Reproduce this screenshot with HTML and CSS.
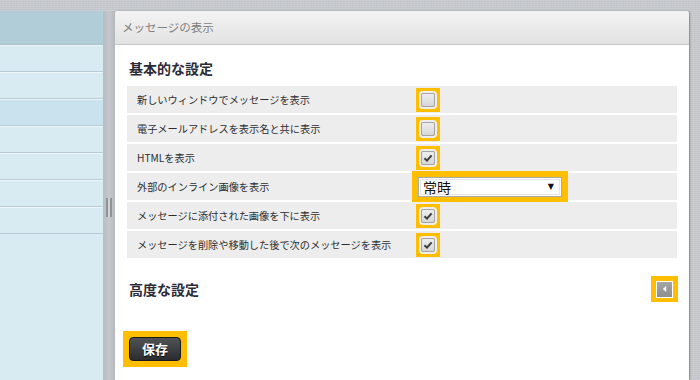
FILE: index.html
```html
<!DOCTYPE html>
<html lang="ja">
 <head>
  <meta charset="utf-8">
  <title>メッセージの表示</title>
  <link rel="stylesheet" href="styles.css">
 </head>
 <body>
  <div class="layout">
   <div class="sidebar">
    <div class="sidebar-head"></div>
    <div class="side-row"></div>
    <div class="side-row"></div>
    <div class="side-row selected"></div>
    <div class="side-row"></div>
    <div class="side-row"></div>
    <div class="side-row"></div>
    <div class="side-row"></div>
   </div>
   <div class="splitter"><span class="grip"></span></div>
   <div class="panel">
    <div class="panel-head">メッセージの表示</div>
    <div class="panel-body">
     <h2 class="section-title">基本的な設定</h2>
     <div class="options">
      <div class="opt">
       <span class="opt-label">新しいウィンドウでメッセージを表示</span>
       <span class="hl"><span class="check"></span></span>
      </div>
      <div class="opt">
       <span class="opt-label">電子メールアドレスを表示名と共に表示</span>
       <span class="hl"><span class="check"></span></span>
      </div>
      <div class="opt">
       <span class="opt-label">HTMLを表示</span>
       <span class="hl"><span class="check on"><svg viewBox="0 0 10 10" width="10" height="10"><path d="M1.5 5.2 L4 7.6 L8.6 2.4" fill="none" stroke="#3c3c3c" stroke-width="2"/></svg></span></span>
      </div>
      <div class="opt">
       <span class="opt-label">外部のインライン画像を表示</span>
       <span class="hl hl-select"><span class="select"><span>常時</span><span class="arrow">▼</span></span></span>
      </div>
      <div class="opt">
       <span class="opt-label">メッセージに添付された画像を下に表示</span>
       <span class="hl"><span class="check on"><svg viewBox="0 0 10 10" width="10" height="10"><path d="M1.5 5.2 L4 7.6 L8.6 2.4" fill="none" stroke="#3c3c3c" stroke-width="2"/></svg></span></span>
      </div>
      <div class="opt">
       <span class="opt-label">メッセージを削除や移動した後で次のメッセージを表示</span>
       <span class="hl"><span class="check on"><svg viewBox="0 0 10 10" width="10" height="10"><path d="M1.5 5.2 L4 7.6 L8.6 2.4" fill="none" stroke="#3c3c3c" stroke-width="2"/></svg></span></span>
      </div>
     </div>
     <div class="advanced">
      <h2 class="section-title">高度な設定</h2>
      <span class="hl hl-toggle"><span class="toggle"><svg viewBox="0 0 6 8" width="5" height="8"><path d="M5 0.5 L1 4 L5 7.5 Z" fill="#fff"/></svg></span></span>
     </div>
     <span class="hl hl-save"><span class="save">保存</span></span>
    </div>
   </div>
  </div>
 </body>
</html>
```

FILE: styles.css
```css
body {
   margin: 0;
   background-color: #c8cbcf;
   background-image: repeating-linear-gradient(90deg, rgba(255,255,255,0.06) 0 1px, transparent 1px 3px),
                     repeating-linear-gradient(0deg, rgba(0,0,0,0.03) 0 1px, transparent 1px 2px);
   font-family: "Noto Sans CJK JP", "Liberation Sans", sans-serif;
   color: #333;
   height: 380px;
   overflow: hidden;
}

.layout {
   display: flex;
   padding-top: 11px;
   height: 369px;
}

.sidebar {
   width: 103px;
   background: #d9ebf2;
   border-top-right-radius: 3px;
   overflow: hidden;
}

.sidebar-head {
   height: 33px;
   background: #b1cdd7;
   border-bottom: 1px solid #a6c2cd;
}

.side-row {
   height: 26px;
   background: #d9ebf2;
   border-bottom: 1px solid #b6ccd6;
   box-shadow: inset 0 1px 0 #eef6f9;
}

.side-row.selected {
   background: #c9e2ed;
}

.splitter {
   width: 12px;
   display: flex;
   align-items: center;
   justify-content: center;
   background: linear-gradient(90deg, #b9bcc0, #c4c7cb 50%, #b6b9bd);
}

.grip {
   width: 6px;
   height: 19px;
   margin-top: 24px;
   border-left: 2px solid #8f9397;
   border-right: 2px solid #8f9397;
   box-sizing: border-box;
   background: #d0d3d6;
}

.panel {
   width: 574px;
   background: #fff;
   border-top-left-radius: 3px;
   border-top-right-radius: 3px;
   box-shadow: 1px 0 2px rgba(0,0,0,0.35);
}

.panel-head {
   height: 33px;
   line-height: 33px;
   padding-left: 7px;
   font-size: 11.5px;
   color: #808080;
   background: linear-gradient(#f3f3f3, #e3e3e3);
   border-bottom: 1px solid #c9c9c9;
   border-top-left-radius: 3px;
   border-top-right-radius: 3px;
}

.panel-body {
   padding: 0 12px;
}

.section-title {
   margin: 0;
   padding-left: 2px;
   font-size: 14px;
   font-weight: bold;
   color: #2b2b38;
}

.panel-body > .section-title {
   height: 41px;
   line-height: 46px;
}

.options {
   display: flex;
   flex-direction: column;
   gap: 2px;
}

.opt {
   height: 27px;
   display: flex;
   align-items: center;
   background: #ededed;
}

.opt-label {
   width: 285px;
   padding-left: 10px;
   box-sizing: border-box;
   font-size: 10.2px;
   color: #2e2e2e;
}

.hl {
   display: flex;
   align-items: center;
   justify-content: center;
   background: #ffbf00;
}

.opt .hl {
   width: 24px;
   height: 24px;
   margin-left: 4px;
}

.check {
   width: 12px;
   height: 12px;
   border: 1px solid #a4a4a4;
   border-radius: 2px;
   background: linear-gradient(#eeeeee, #d6d6d6);
   box-shadow: 0 0 0 2px #eeeeee;
   display: flex;
   align-items: center;
   justify-content: center;
}

.opt .hl-select {
   width: 156px;
   height: 31px;
   margin-left: 0;
}

.select {
   width: 144px;
   height: 20px;
   border: 1px solid #a9a9a9;
   box-shadow: inset 0 0 0 1px #fff, inset 0 0 0 2px #e4e4e4;
   background: #fff;
   display: flex;
   align-items: center;
   justify-content: space-between;
   padding: 0 7px 0 4px;
   box-sizing: border-box;
   font-size: 14px;
   color: #111;
}

.arrow {
   font-size: 8px;
   font-family: "DejaVu Sans", sans-serif;
}

.advanced {
   display: flex;
   align-items: center;
   justify-content: space-between;
   height: 26px;
   margin-top: 18px;
}

.hl-toggle {
   width: 27px;
   height: 26px;
   margin-right: -1px;
}

.toggle {
   width: 15px;
   height: 15px;
   border: 1px solid #fff;
   background: linear-gradient(#a5a5a5, #8e8e8e);
   display: flex;
   align-items: center;
   justify-content: center;
}

.hl-save {
   display: inline-flex;
   width: 64px;
   height: 36px;
   margin: 29px 0 0 -4px;
}

.save {
   width: 52px;
   height: 24px;
   box-sizing: border-box;
   border: 1px solid #1a1a1a;
   border-radius: 4px;
   background: linear-gradient(#505256, #2a2c2f);
   color: #fff;
   font-size: 13px;
   font-weight: bold;
   line-height: 22px;
   text-align: center;
   text-shadow: 0 1px 0 #000;
}
```
